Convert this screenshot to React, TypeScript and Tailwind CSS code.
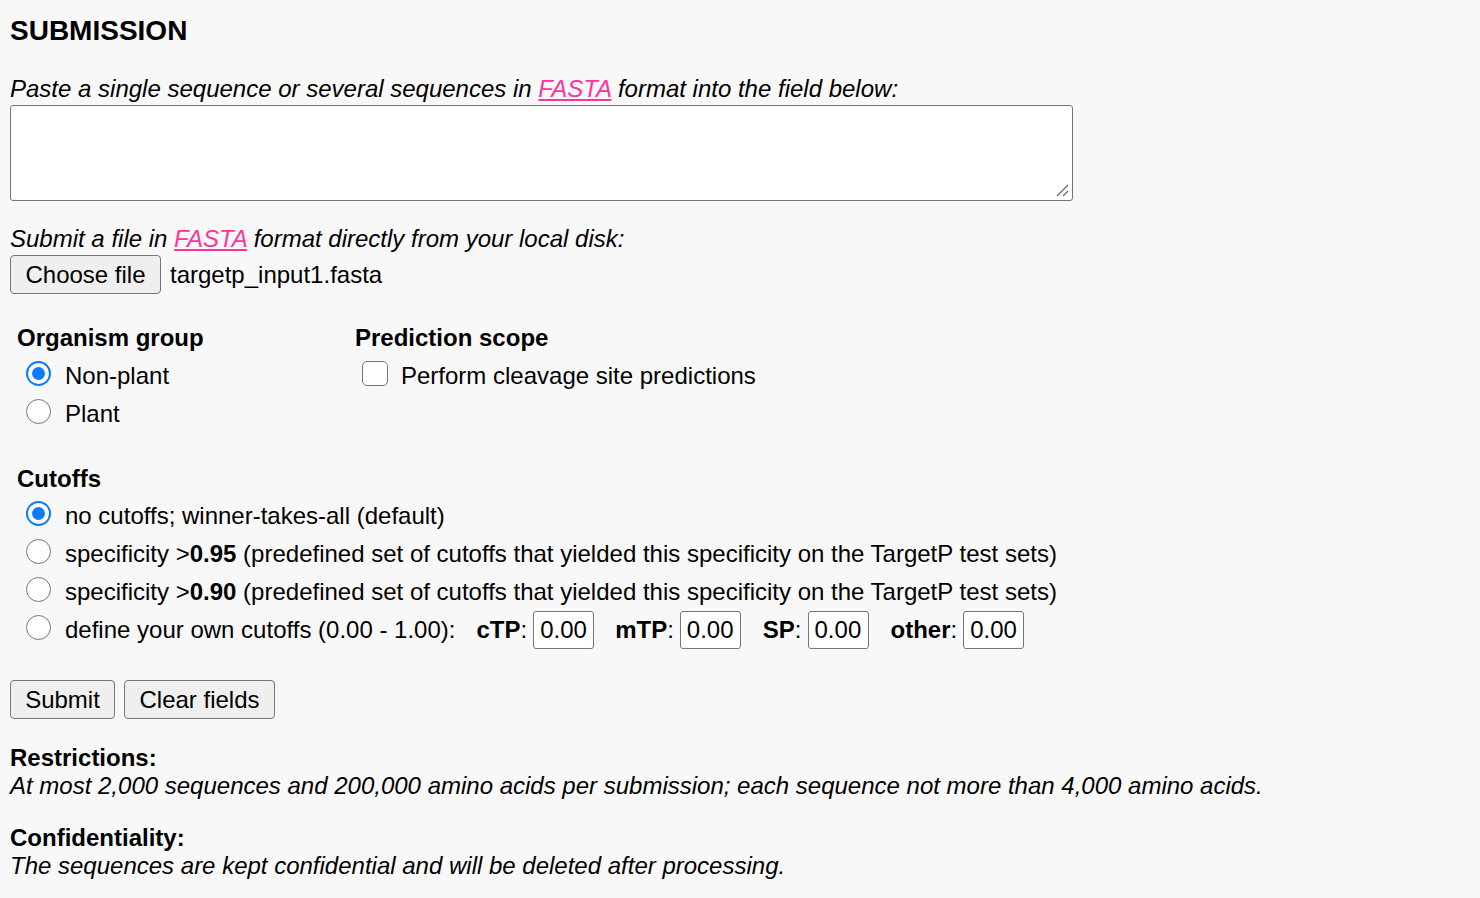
import React from "react";

const FONT = { fontFamily: '"Liberation Sans", Arial, Helvetica, sans-serif' };

function Radio({ checked }: { checked?: boolean }) {
  return checked ? (
    <span className="mt-[-5px] ml-[16px] mr-[14px] flex h-[25px] w-[25px] shrink-0 items-center justify-center rounded-full border-[2px] border-[#0a7aff] bg-white">
      <span className="h-[13px] w-[13px] rounded-full bg-[#0a7aff]" />
    </span>
  ) : (
    <span className="mt-[-5px] ml-[16px] mr-[14px] h-[25px] w-[25px] shrink-0 rounded-full border-[1.5px] border-[#767676] bg-white" />
  );
}

function Row({ checked, children }: { checked?: boolean; children: React.ReactNode }) {
  return (
    <div className="flex h-[38px] items-center leading-[38px]">
      <Radio checked={checked} />
      <div className="flex items-center whitespace-nowrap">{children}</div>
    </div>
  );
}

function NumBox() {
  return (
    <span className="ml-[6px] flex h-[38px] w-[61px] items-center rounded-[3px] border-[1.5px] border-[#767676] bg-white pl-[6px] leading-[30px]">
      0.00
    </span>
  );
}

function Btn({ w, children }: { w: string; children: React.ReactNode }) {
  return (
    <button
      className={`flex h-[39px] items-center justify-center rounded-[4px] border-[1.5px] border-[#767676] bg-[#efefef] text-[24px] leading-[28px] text-black ${w}`}
      style={FONT}
    >
      {children}
    </button>
  );
}

export default function App() {
  return (
    <div className="min-h-[898px] w-full bg-[#f8f8f8] px-[10px] text-[24px] leading-[28px] text-black" style={FONT}>
      <h3 className="pt-[15px] text-[28px] font-bold leading-[32px]">SUBMISSION</h3>

      <p className="mt-[28px] italic">
        Paste a single sequence or several sequences in{" "}
        <a className="text-[#ff3399] underline">FASTA</a> format into the field below:
      </p>
      <div className="relative mt-[2px] h-[96px] w-[1063px] rounded-[3px] border-[1.5px] border-[#767676] bg-white">
        <svg className="absolute right-[3px] bottom-[3px]" width="14" height="14" viewBox="0 0 14 14">
          <line x1="2" y1="13" x2="13" y2="2" stroke="#6b6b6b" strokeWidth="1.3" />
          <line x1="8" y1="13" x2="13" y2="8" stroke="#6b6b6b" strokeWidth="1.3" />
        </svg>
      </div>

      <p className="mt-[24px] italic">
        Submit a file in <a className="text-[#ff3399] underline">FASTA</a> format directly from your local disk:
      </p>
      <div className="mt-[2px] flex items-center gap-[9px]">
        <Btn w="w-[151px]">Choose file</Btn>
        <span>targetp_input1.fasta</span>
      </div>

      <div className="mt-[30px] flex">
        <div className="w-[338px] pl-[7px]">
          <div className="font-bold">Organism group</div>
          <div className="mt-[5px] -ml-[7px]">
            <Row checked>Non-plant</Row>
            <Row>Plant</Row>
          </div>
        </div>
        <div>
          <div className="pl-[7px] font-bold">Prediction scope</div>
          <div className="mt-[5px] flex h-[38px] items-center leading-[38px]">
            <span className="mt-[-5px] ml-[14px] mr-[13px] h-[25px] w-[26px] shrink-0 rounded-[5px] border-[1.5px] border-[#767676] bg-white" />
            <span>Perform cleavage site predictions</span>
          </div>
        </div>
      </div>

      <div className="mt-[32px] pl-[7px] font-bold">Cutoffs</div>
      <div className="mt-[4px]">
        <Row checked>no cutoffs; winner-takes-all (default)</Row>
        <Row>
          specificity &gt;<b>0.95</b>&nbsp;(predefined set of cutoffs that yielded this specificity on the TargetP test sets)
        </Row>
        <Row>
          specificity &gt;<b>0.90</b>&nbsp;(predefined set of cutoffs that yielded this specificity on the TargetP test sets)
        </Row>
        <Row>
          <span>define your own cutoffs (0.00 - 1.00):</span>
          <span className="ml-[21px]"><b>cTP</b>:</span>
          <NumBox />
          <span className="ml-[21px]"><b>mTP</b>:</span>
          <NumBox />
          <span className="ml-[22px]"><b>SP</b>:</span>
          <NumBox />
          <span className="ml-[22px]"><b>other</b>:</span>
          <NumBox />
        </Row>
      </div>

      <div className="mt-[31px] flex gap-[9px]">
        <Btn w="w-[105px]">Submit</Btn>
        <Btn w="w-[151px]">Clear fields</Btn>
      </div>

      <div className="mt-[25px] font-bold">Restrictions:</div>
      <p className="italic">
        At most 2,000 sequences and 200,000 amino acids per submission; each sequence not more than 4,000 amino acids.
      </p>
      <div className="mt-[24px] font-bold">Confidentiality:</div>
      <p className="italic">The sequences are kept confidential and will be deleted after processing.</p>
    </div>
  );
}
